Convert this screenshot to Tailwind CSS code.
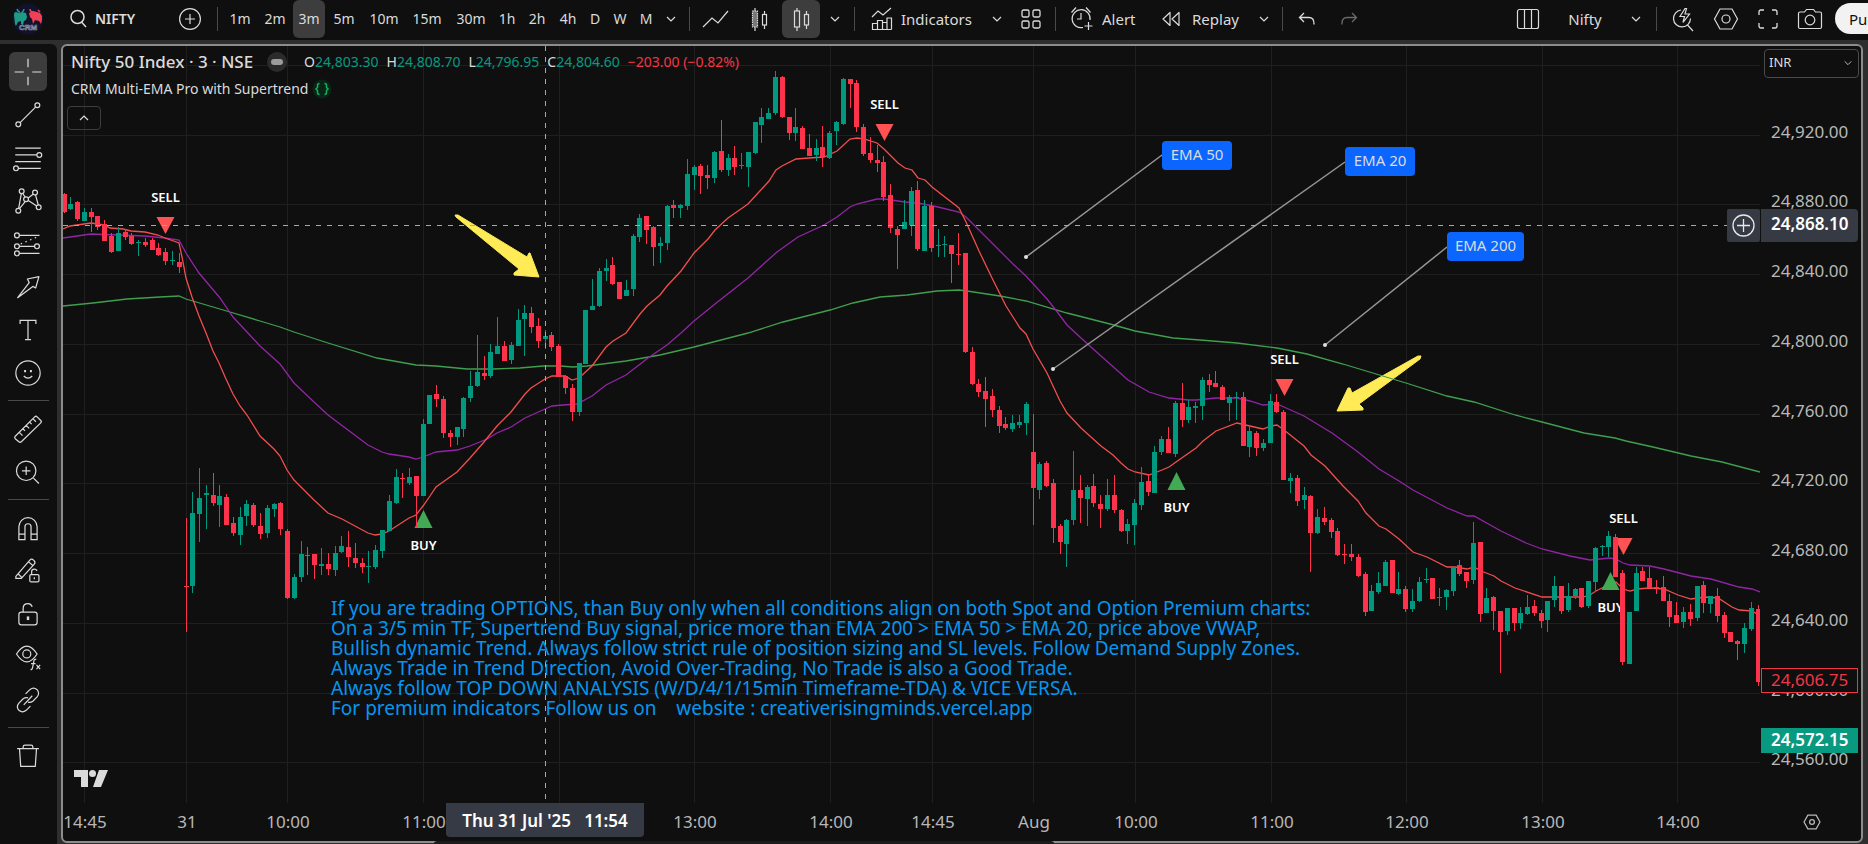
<!DOCTYPE html>
<html lang="en">
<head>
<meta charset="utf-8">
<title>NIFTY chart</title>
<script src="https://cdn.jsdelivr.net/npm/@tailwindcss/browser@4"></script>
</head>
<body class="h-screen flex flex-col overflow-hidden bg-[#2e2e2e] font-['Noto_Sans',sans-serif] text-[#dbdbdb]">

<svg class="hidden">
  <symbol id="chev" viewBox="0 0 12 12"><path d="M2 4l4 4 4-4" fill="none" stroke="currentColor" stroke-width="1.2"/></symbol>
</svg>

<header class="h-10 shrink-0 bg-[#0f0f0f] flex items-center pb-0.5 text-sm leading-5 whitespace-nowrap overflow-hidden">
  <a href="#" aria-label="Home" class="w-14 flex justify-center shrink-0">
    <svg width="32" height="32" viewBox="0 0 32 32"><circle cx="16" cy="16" r="15.500" fill="#12122b"/><path d="M2 12q0-3 2-3l3 1 3-1 4 1 1 4-1 3-2 1-1 4-2-1v-3l-3 1-2 4-1-2z" fill="#1f9a86"/><path d="M5 6q1 3 3 3M12 6q0 2-2 3" stroke="#1f9a86" stroke-width="1.500" fill="none"/><path d="M17 10l4-2 4 1 3 1 2 3v4l-1 4-2-3-4-1-2 4-1-5-2-2z" fill="#ef4056"/><path d="M18 6q0 3 3 3M26 7l2 2" stroke="#ef4056" stroke-width="1.500" fill="none"/><text x="16" y="27" text-anchor="middle" font-size="8" font-weight="bold" fill="#14142a" stroke="#9aa0b5" stroke-width="0.600" font-family="Liberation Sans">CRM</text></svg>
  </a>
  <button class="w-28 h-full pl-3.5 flex items-center gap-2 shrink-0 font-semibold">
    <svg width="17" height="20" viewBox="0 0 17 20" fill="none" stroke="currentColor" stroke-width="1.500"><circle cx="7.500" cy="8" r="6.500"/><path d="M11.500 13l4.500 5"/></svg>NIFTY
  </button>
  <button aria-label="Compare symbol" class="w-11 flex justify-center shrink-0"><svg width="24" height="24" viewBox="0 0 24 24" fill="none" stroke="currentColor" stroke-width="1.200"><circle cx="12" cy="12" r="10.400"/><path d="M12 7v10M7 12h10"/></svg></button>
  <span class="w-px h-6 bg-[#4a4a4a] mx-[5px] shrink-0"></span>
  <button class="w-[34px] shrink-0">1m</button>
  <button class="w-9 shrink-0">2m</button>
  <button class="w-8 h-[38px] self-start shrink-0 rounded-md bg-[#3d3d3d]">3m</button>
  <button class="w-[38px] shrink-0">5m</button>
  <button class="w-[42px] shrink-0">10m</button>
  <button class="w-11 shrink-0">15m</button>
  <button class="w-11 shrink-0">30m</button>
  <button class="w-7 shrink-0">1h</button>
  <button class="w-8 shrink-0">2h</button>
  <button class="w-[30px] shrink-0">4h</button>
  <button class="w-6 shrink-0">D</button>
  <button class="w-[26px] shrink-0">W</button>
  <button class="w-[26px] shrink-0">M</button>
  <button aria-label="More intervals" class="w-6 flex justify-center shrink-0"><svg width="12" height="12"><use href="#chev"/></svg></button>
  <span class="w-px h-6 bg-[#4a4a4a] mx-1.5 shrink-0"></span>
  <button aria-label="Line" class="w-10 flex justify-center shrink-0"><svg width="28" height="24" viewBox="0 0 28 24" fill="none" stroke="currentColor" stroke-width="1.200"><path d="M1 20l9-9 6 5L26 4"/></svg></button>
  <button aria-label="Candles" class="w-[46px] flex justify-center shrink-0"><svg width="22" height="28" viewBox="0 0 22 28" fill="none" stroke="currentColor" stroke-width="1.200"><path d="M7 3v3M7 22v4M16.500 6v3M16.500 20v4"/><rect x="4.500" y="6" width="5" height="16" fill="#777" stroke-dasharray="1.500 0.800"/><rect x="14.500" y="9.500" width="4" height="10.500"/></svg></button>
  <button aria-label="Hollow candles" class="w-[38px] h-[38px] self-start rounded-md bg-[#3d3d3d] flex justify-center items-center shrink-0"><svg width="22" height="28" viewBox="0 0 22 28" fill="none" stroke="currentColor" stroke-width="1.200"><path d="M7 3v3M7 22v4M16.500 6v3M16.500 20v4"/><rect x="4.500" y="6" width="5" height="16"/><rect x="14.500" y="9.500" width="4" height="10.500"/></svg></button>
  <button aria-label="More chart types" class="w-[30px] flex justify-center shrink-0"><svg width="12" height="12"><use href="#chev"/></svg></button>
  <span class="w-px h-6 bg-[#4a4a4a] mx-1 shrink-0"></span>
  <button class="w-[122px] pl-3 flex items-center gap-2 shrink-0 text-[15px]"><svg width="22" height="24" viewBox="0 0 22 24" fill="none" stroke="currentColor" stroke-width="1.200"><path d="M1 10l6-6 5 4 8-7M1.500 22.500v-6h5v6zM6.500 22.500v-9h5v9M11.500 22.500v-7h4.500v7M16 22.500V11h4.500v11.500M1.500 22.500h19"/></svg>Indicators</button>
  <button aria-label="Favourite indicators" class="w-8 flex justify-center shrink-0"><svg width="12" height="12"><use href="#chev"/></svg></button>
  <button aria-label="Layout templates" class="w-9 flex justify-center shrink-0"><svg width="20" height="20" viewBox="0 0 20 20" fill="none" stroke="currentColor" stroke-width="1.300"><rect x="1" y="1" width="7" height="7" rx="1.500"/><rect x="12" y="1" width="7" height="7" rx="1.500"/><rect x="1" y="12" width="7" height="7" rx="1.500"/><rect x="12" y="12" width="7" height="7" rx="1.500"/></svg></button>
  <span class="w-px h-6 bg-[#4a4a4a] mx-1.5 shrink-0"></span>
  <button class="w-[92px] pl-2 flex items-center gap-2 shrink-0 text-[15px]"><svg width="24" height="26" viewBox="0 0 24 26" fill="none" stroke="currentColor" stroke-width="1.200"><path d="M13 21.500A9 9 0 1 1 20 14M11 7v6H7M1.500 6.500l4.500-5M16 1.500l4.500 5M18.500 16v8M14.500 20h8"/></svg>Alert</button>
  <button class="w-[92px] pl-2 flex items-center gap-3 shrink-0 text-[15px]"><svg width="18" height="16" viewBox="0 0 18 16" fill="none" stroke="currentColor" stroke-width="1.200" stroke-linejoin="round"><path d="M8 1.500v13L1 8zM17 1.500v13L10 8z"/></svg>Replay</button>
  <button aria-label="Replay options" class="w-9 flex justify-center shrink-0"><svg width="12" height="12"><use href="#chev"/></svg></button>
  <span class="w-px h-6 bg-[#4a4a4a] mr-1 shrink-0"></span>
  <button aria-label="Undo" class="w-10 flex justify-center shrink-0"><svg width="18" height="14" viewBox="0 0 18 14" fill="none" stroke="currentColor" stroke-width="1.300"><path d="M6 1L1.500 5.500 6 10M2 5.500h9q5 0 5 6v1"/></svg></button>
  <button aria-label="Redo" class="w-11 flex justify-center shrink-0 text-[#6a6a6a]"><svg width="18" height="14" viewBox="0 0 18 14" fill="none" stroke="currentColor" stroke-width="1.300"><path d="M12 1l4.500 4.500L12 10M16 5.500H7q-5 0-5 6v1"/></svg></button>
  <div class="flex-1"></div>
  <button aria-label="Select layout" class="w-11 flex justify-center shrink-0"><svg width="24" height="22" viewBox="0 0 24 22" fill="none" stroke="currentColor" stroke-width="1.200"><rect x="1.500" y="1.500" width="21" height="19" rx="2"/><path d="M8.500 1.500v19M15.500 1.500v19"/></svg></button>
  <button class="w-[70px] shrink-0 text-[15px]">Nifty</button>
  <button aria-label="Manage layouts" class="w-8 flex justify-center shrink-0"><svg width="12" height="12"><use href="#chev"/></svg></button>
  <span class="w-px h-6 bg-[#4a4a4a] mx-1 shrink-0"></span>
  <button aria-label="Quick search" class="w-11 flex justify-center shrink-0"><svg width="26" height="28" viewBox="0 0 26 28" fill="none" stroke="currentColor" stroke-width="1.200"><path d="M11 5a8.500 8.500 0 1 0 9.500 8.500M17.500 20l5.500 6M15 3.500l-5 8h4.500l-1.500 6 6.500-8.500H15l1.500-5.500z"/></svg></button>
  <button aria-label="Settings" class="w-[42px] flex justify-center shrink-0"><svg width="26" height="24" viewBox="0 0 26 24" fill="none" stroke="currentColor" stroke-width="1.200"><path d="M7 2h12l5.500 10L19 22H7L1.500 12z"/><circle cx="13" cy="12" r="4"/></svg></button>
  <button aria-label="Fullscreen" class="w-[42px] flex justify-center shrink-0"><svg width="22" height="22" viewBox="0 0 22 22" fill="none" stroke="currentColor" stroke-width="1.300"><path d="M2 7V4q0-2 2-2h3M15 2h3q2 0 2 2v3M20 15v3q0 2-2 2h-3M7 20H4q-2 0-2-2v-3"/></svg></button>
  <button aria-label="Snapshot" class="w-[42px] flex justify-center shrink-0"><svg width="26" height="22" viewBox="0 0 26 22" fill="none" stroke="currentColor" stroke-width="1.200"><path d="M3 4h4.500l2-2.500h7l2 2.500H23q1.500 0 1.500 1.500V19q0 1.500-1.500 1.500H3Q1.500 20.500 1.500 19V5.500Q1.500 4 3 4z"/><circle cx="13" cy="12" r="4.800"/></svg></button>
  <button class="w-[33px] h-[31px] ml-1 shrink-0 pl-3.5 rounded-l-full bg-[#f2f2f2] text-[#0f0f0f] text-[15px] text-left overflow-hidden self-start mt-[3px] pr-0">Publish</button>
</header>

<div class="flex-1 min-h-0 flex pt-1">
  <nav class="w-[57px] shrink-0 bg-[#0f0f0f] rounded-tr-md pt-1.5 flex flex-col items-center [&_svg]:block" id="tools"></nav>

  <main class="relative flex-1 min-w-0 ml-1 mr-[5px] mb-px border-2 border-[#8c8c8c] rounded-md bg-[#0f0f0f] flex flex-col overflow-hidden">
    <div class="flex-1 min-h-0 flex">
      <section class="relative flex-1 min-w-0">
        <svg id="plot" class="block w-full h-full" viewBox="63 46 1697 757" preserveAspectRatio="xMinYMin meet" font-family="Noto Sans"></svg>
        <div class="absolute left-2 top-1 flex flex-col items-start">
          <div class="flex items-center h-6 whitespace-nowrap">
            <h1 class="text-[17px] w-[192px] font-medium">Nifty 50 Index · 3 · NSE</h1>
            <span class="w-5 h-5 rounded-full bg-[#2b2b2b] flex items-center justify-center mr-[17px] ml-1"><span class="w-3 h-1.5 rounded-full bg-[#9c9c9c]"></span></span>
            <div class="flex gap-2 text-sm text-[#dbdbdb] [&_b]:font-normal [&_b]:text-[#089981]">
              <span>O<b>24,803.30</b></span><span>H<b>24,808.70</b></span><span>L<b>24,796.95</b></span><span>C<b>24,804.60</b></span><span class="text-[#f23645]">−203.00 (−0.82%)</span>
            </div>
          </div>
          <div class="flex items-center h-[30px] text-sm gap-1 whitespace-nowrap">CRM Multi-EMA Pro with Supertrend
            <svg width="20" height="20" viewBox="0 0 20 20"><circle cx="10" cy="10" r="9.500" fill="#0b2418"/><path d="M7.500 4.500Q5.500 4.500 5.500 6.500v2L4 10l1.500 1.500v2q0 2 2 2M12.500 4.500q2 0 2 2v2L16 10l-1.500 1.500v2q0 2-2 2" fill="none" stroke="#10b35c" stroke-width="1.500"/></svg>
          </div>
          <button aria-label="Collapse legend" class="-ml-1 mt-0.5 w-[34px] h-6 border border-[#3d3d3d] rounded flex items-center justify-center"><svg width="12" height="12" class="rotate-180"><use href="#chev"/></svg></button>
        </div>
      </section>
      <aside id="prices" class="relative w-[101px] shrink-0 text-[17px] leading-6 text-[#b8b8b8]">
        <select aria-label="Currency" class="appearance-none absolute left-1 top-[3px] w-[95px] h-[29px] pb-1 pl-1 bg-[#0f0f0f] border border-[#4a4a4a] rounded text-[13px] text-[#dbdbdb]"><option>INR</option></select>
        <svg width="10" height="10" class="absolute right-2 top-3"><use href="#chev"/></svg>
      </aside>
    </div>
    <div id="times" class="relative h-[38px] shrink-0 text-[17px] leading-6 text-[#b8b8b8]">
      <button aria-label="Axis settings" class="absolute right-10 top-2.5"><svg width="18" height="18" viewBox="0 0 26 24" fill="none" stroke="currentColor" stroke-width="1.800"><path d="M7 2h12l5.500 10L19 22H7L1.500 12z"/><circle cx="13" cy="12" r="3.500"/></svg></button>
    </div>
  </main>
</div>
<div class="absolute bottom-0 left-[434px] right-[814px] h-[3px] bg-[#1c1c1c] rounded-t"></div>

<script>
// Drawing tools; null is a divider
const tools = [
 ['Cross','<path d="M14 3v7M14 18v7M3 14h7.500M17.500 14H25"/>'],
 ['Trend line','<circle cx="21.700" cy="6" r="2"/><circle cx="6" cy="21.700" r="2"/><path d="M7.500 20.300L20.200 7.500"/>'],
 ['Fib retracement','<path d="M3.500 5.800h21M3.500 11.500h17.700M3.500 17h21M6.200 22.500h18.300"/><circle cx="23.300" cy="11.500" r="2"/><circle cx="4.100" cy="22.500" r="2"/>'],
 ['Patterns','<circle cx="8.800" cy="6" r="2"/><circle cx="19.800" cy="7.100" r="2"/><circle cx="6" cy="22" r="2"/><circle cx="22.800" cy="19.200" r="2"/><circle cx="12.400" cy="12.600" r="2"/><path d="M8.500 8L6.300 20M9.700 7.800l1.900 3M11.700 14.500L7 20.200M14.200 11.500l4-3M14.200 13.600l7 4.500M20.200 9l2.200 8.200"/>'],
 ['Forecasting','<circle cx="4.900" cy="6.900" r="2"/><circle cx="4.900" cy="15.900" r="2"/><circle cx="21.400" cy="15.900" r="2"/><circle cx="4.900" cy="21.700" r="2"/><path d="M7 6.900h16.500M7 15.900h12.300M7 21.700h16.500"/><path d="M8 14L22 8" stroke-dasharray="1.200 3"/>'],
 ['Arrow','<path d="M5.500 22.800L15 10.400 13.500 7.400 23 5.500 20.300 14.800 18 13.500z" stroke-linejoin="round"/>'],
 ['Text','<path d="M7.500 9V6h13v3M14 6v16M11.500 22h5"/>'],
 ['Icons','<circle cx="14" cy="14" r="10"/><path d="M10.500 16.500q3.500 3.500 7 0"/><path d="M10.800 12.500h1.600M15.600 12.500h1.600" stroke-width="1.800"/>'],
 null,
 ['Measure','<path d="M3.500 20L19.500 4q1-1 2 0l3 3q1 1 0 2L8.500 24.500q-1 1-2 0l-3-2.500q-1-1 0-2zM7 17l2.500 2.500M10 14l1.500 1.500M12.500 11l2.500 2.500M15.500 8.500L17 10M18 5.500l2.500 2.500"/>'],
 ['Zoom in','<circle cx="12.500" cy="13" r="8"/><path d="M18.500 19l4.500 4.500M12.500 9.500v7M9 13h7"/>'],
 null,
 ['Magnet','<path d="M6.500 23.500V13a7.500 7.500 0 0 1 15 0v10.500h-5V13a2.500 2.500 0 0 0-5 0v10.500zM6.500 19h5M16.500 19h5"/>'],
 ['Keep drawing','<path d="M4 18.500L15.500 5q1.500-1.500 3 0l.500.500q1.500 1.500 0 3L8.500 20H4zM6 16.500l3 3M14.500 6.500l3.500 3"/><rect x="15.500" y="17" width="7.500" height="6" rx="1"/><path d="M17 17v-2.500q0-2 2.200-2 1.600 0 2.200 1.500M19.200 19.200v1.500"/>'],
 ['Lock drawings','<rect x="6.500" y="12.500" width="15" height="10.500" rx="2"/><path d="M10 12.500V9.500q0-4 4-4 2.500 0 3.500 2.500"/><path d="M14 16v3" stroke-width="2"/>'],
 ['Hide','<path d="M4.500 11.500q8.500-13 17 0q-8.500 13-17 0z"/><circle cx="13" cy="11.500" r="3.300"/><path d="M16 24.500q1.500 0 1.800-2l1-5q.3-2 2-1.500M16.500 19.500h3.700M21 20.500l3 3.500M24 20.500l-3 3.500"/>'],
 ['Sync','<path d="M12 9l3.500-3.500q3-2.500 6 0 2.500 3 0 6L18 15q-2 1.500-4 .8M16 19l-3.500 3.500q-3 2.500-6 0-2.500-3 0-6L10 13q2-1.500 4-.8M10.500 18l7-7.500"/>'],
 null,
 ['Remove','<path d="M5 8h18M10 8V6.500Q10 5 11.500 5h5Q18 5 18 6.500V8M7 8l1 14.500h12L21 8"/>'],
];
document.getElementById('tools').innerHTML = tools.map((t, i) => t
  ? `<button aria-label="${t[0]}" class="h-[43px] w-full pr-0.5 flex items-center justify-center shrink-0"><span class="${i ? '' : 'bg-[#3d3d3d] '}w-[38px] h-[39px] rounded-md flex items-center justify-center"><svg width="34" height="34" viewBox="0 0 28 28" fill="none" stroke="currentColor" stroke-width="1">${t[1]}</svg></span></button>`
  : '<span class="w-[41px] h-px my-1.5 shrink-0 bg-[#4a4a4a]"></span>').join('');

// One entry per 3-minute bar: direction, high, low, body top, body bottom
const bars = `r193 213 194 212,g197 210 204 209,r201 221 202 219,g208 221 212 221,r208 232 212 217,r216 230 216 227,r220 241 224 241,r233 253 236 252,g227 251 233 251,r229 240 232 237,r233 245 236 244,g240 256 242 243,r238 247 242 245,r238 250 240 250,r243 256 248 255,r248 265 252 261,g251 265 260 261,r253 273 262 267,
r518 632 586 587,g492 593 513 586,g468 542 498 514,g485 529 493 495,r473 506 495 503,g485 527 496 505,r494 525 497 525,r517 536 523 533,g507 545 517 535,g500 526 504 516,r503 527 505 525,r513 539 526 534,g505 538 508 533,g503 517 504 509,r502 535 503 529,r529 599 531 598,g574 599 577 598,g541 582 554 577,r547 575 555 556,r554 579 554 565,g548 575 564 566,r553 575 564 569,g546 576 553 570,g536 553 546 552,r531 567 547 557,r543 568 558 563,r558 573 563 567,g551 583 566 567,g545 569 550 567,g530 558 530 551,g495 531 501 531,g469 504 477 503,r473 498 478 479,g468 485 477 483,r476 527 476 496,g419 496 424 496,g395 424 395 424,r385 407 394 399,r396 438 399 433,r430 447 433 437,
g427 445 427 437,g397 437 398 429,g371 402 386 398,g335 387 372 386,r356 380 373 376,g344 378 352 376,g317 354 346 354,r341 361 346 361,g342 364 345 360,g309 346 320 346,g305 356 313 319,r307 333 313 327,r318 348 326 341,g330 349 336 339,r332 351 335 347,r344 377 346 377,r375 394 376 388,r384 421 388 412,g363 416 363 412,g310 364 310 364,g279 310 306 310,g268 307 271 306,g259 281 268 271,r257 285 265 284,r282 299 282 299,g280 296 290 296,g234 296 236 289,g214 242 218 237,r216 244 216 230,r226 266 227 247,g237 263 243 246,g205 250 206 243,r200 218 205 208,g204 218 205 208,g159 210 174 206,
g165 190 167 175,r164 194 166 176,r165 189 175 178,g151 183 152 178,r120 172 151 170,g154 176 158 170,r146 175 158 167,g153 169 165 166,g152 187 152 167,g122 154 122 153,g108 143 117 125,g108 119 113 119,g71 115 77 113,r76 118 77 117,r117 140 117 133,g108 141 127 133,r126 149 128 149,r134 156 148 156,g139 161 148 155,r126 167 147 157,g131 159 133 158,g121 145 122 131,g78 125 79 124,r79 108 79 84,r80 132 83 127,r124 156 127 154,r137 163 153 160,r145 172 160 163,r156 201 162 197,r184 233 195 228,r226 269 229 235,g200 229 222 229,g187 236 191 225,r181 251 190 249,g200 251 206 251,r202 252 206 248,g229 257 245 246,g236 257 244 245,r245 283 245 254,r233 265 254 255,r253 353 253 352,
r347 385 352 384,r379 397 384 392,r377 427 391 399,r389 417 396 410,r406 433 410 426,r417 430 424 428,g415 432 423 429,g415 428 422 425,g402 435 404 423,r414 525 452 488,g462 499 464 490,r461 487 463 486,r479 543 483 528,r524 554 526 542,g519 567 520 544,g451 525 490 520,r475 523 490 498,g485 526 487 499,r474 507 486 503,r495 528 504 509,g479 511 495 509,r475 513 495 510,r509 532 510 531,g519 544 524 531,g499 545 503 525,g467 510 482 505,r474 496 481 492,g446 493 452 493,g436 455 439 452,r427 453 439 453,g401 457 403 454,r383 427 403 420,g400 423 407 420,g402 423 406 408,g377 420 380 406,r374 392 380 385,r371 387 383 387,r385 400 387 400,g395 421 397 403,g392 420 397 398,r392 446 397 446,g425 457 431 447,r431 456 433 448,g439 451 443 448,g394 443 401 443,r394 413 402 412,r410 480 412 480,g473 493 478 481,r475 506 478 501,g487 509 495 500,r495 572 496 533,g509 534 517 533,r507 525 518 522,r518 538 520 532,r528 556 531 555,
r544 564 554 555,r544 561 554 557,r554 577 557 576,r572 616 574 612,g585 611 591 611,g572 594 583 592,g560 586 562 586,r560 593 560 593,g572 595 589 594,r586 612 589 609,g589 612 601 609,g577 602 582 601,g568 583 579 580,r578 599 578 599,g588 606 597 598,g589 610 590 597,g567 596 567 591,r560 576 565 574,r572 588 572 581,g522 584 543 580,r542 622 542 614,g588 613 598 613,r596 630 597 611,r611 673 611 632,g608 635 608 631,r608 631 608 623,g607 629 613 623,g595 615 607 614,r600 616 606 613,r610 628 613 621,g601 632 601 620,g576 607 586 600,r586 614 586 611,g583 612 596 610,g588 599 589 596,r588 608 588 607,g581 608 581 606,g547 592 548 582,g545 556 546 547,g531 557 536 547,r534 577 537 577,r570 665 573 662,g612 664 612 664,g567 611 573 611,r567 581 571 581,r567 588 578 588,r580 594 587 588,r576 601 587 601,r594 627 601 617,r602 623 615 623,g607 628 612 622,r604 626 612 619,g586 621 586 618,r581 613 585 603,g596 613 596 604,r588 622 596 616,r612 638 615 633,r632 642 632 642,r640 660 641 644,g623 653 628 644,g602 631 608 629,r605 686 609 682`.split(',').map(s => s.trim());

const ema20 = '63,229 70,226 91,223 104,225 110,228 123,229 131,231 145,232 158,235 165,238 179,243 182,257 186,278 192,297 199,316 206,333 213,351 219,363 226,379 233,394 240,406 247,415 260,436 274,449 280,456 287,470 294,480 314,500 328,513 342,519 368,533 375,535 382,534 389,531 409,518 416,515 423,506 430,496 436,487 450,477 457,472 470,458 484,442 497,426 504,419 511,412 525,394 531,388 545,379 552,376 565,376 572,380 579,378 592,366 606,347 613,341 626,333 640,314 647,306 660,295 667,286 681,271 694,253 708,239 715,230 728,218 748,204 769,181 776,170 782,166 796,159 809,158 824,157 837,151 850,139 857,138 864,139 877,143 884,149 898,163 905,168 912,170 918,178 925,180 932,187 959,208 966,222 979,251 993,280 1006,306 1013,317 1020,328 1026,334 1033,349 1040,361 1047,373 1060,401 1067,413 1081,428 1101,446 1113,455 1121,463 1128,469 1135,472 1149,475 1162,470 1169,467 1176,462 1196,448 1203,441 1216,431 1237,423 1250,426 1263,429 1271,426 1277,425 1284,430 1304,446 1311,455 1325,466 1343,486 1358,501 1366,513 1379,526 1386,529 1399,539 1413,552 1427,557 1447,567 1455,567 1467,569 1474,567 1481,571 1494,576 1501,581 1515,588 1542,597 1560,597 1583,597 1590,595 1596,591 1610,584 1616,582 1623,589 1630,591 1637,589 1650,588 1664,589 1678,595 1691,599 1705,597 1718,598 1732,607 1739,610 1752,611 1760,616';
const ema50 = '63,238 91,234 120,235 145,236 165,238 179,240 186,253 199,273 220,298 233,317 247,332 260,346 280,364 294,383 314,402 328,415 348,430 368,445 382,452 389,454 409,457 416,459 423,457 436,452 457,450 470,446 487,439 497,433 511,427 525,418 545,409 552,406 563,405 577,404 592,396 606,385 626,375 648,358 667,345 681,333 694,321 715,304 748,278 777,252 798,237 824,225 837,217 850,207 857,204 877,199 884,199 905,202 918,203 938,207 959,212 966,217 993,244 1013,264 1026,276 1047,299 1055,309 1067,325 1081,338 1101,356 1128,380 1135,384 1149,392 1169,398 1189,400 1196,400 1216,398 1237,398 1250,401 1263,405 1277,404 1284,407 1304,416 1332,433 1358,452 1379,469 1399,481 1413,490 1447,508 1467,516 1474,516 1501,531 1526,543 1542,549 1570,556 1590,560 1610,558 1616,559 1623,563 1630,565 1650,566 1664,569 1691,576 1711,579 1739,587 1752,589 1760,592';
const ema200 = '63,306 93,303 127,299 160,297 179,296 186,299 230,312 260,321 280,327 294,332 328,343 377,358 416,365 436,366 467,369 493,369 520,368 543,366 560,366 573,367 587,366 626,361 660,355 694,347 748,333 783,322 830,310 853,303 880,297 907,295 937,291 959,290 967,291 1000,296 1026,301 1067,313 1110,324 1135,331 1173,338 1200,340 1237,343 1277,348 1307,354 1343,364 1386,377 1406,383 1447,396 1474,402 1515,415 1542,422 1584,433 1615,438 1626,441 1653,447 1691,456 1722,462 1760,472';

const ticks = [[84,'14:45'],[186,'31'],[287,'10:00'],[423,'11:00'],[559,''],[694,'13:00'],[830,'14:00'],[932,'14:45'],[1033,'Aug'],[1135,'10:00'],[1271,'11:00'],[1406,'12:00'],[1542,'13:00'],[1677,'14:00']];
const levels = [65,135,204,274,344,414,483,553,623,693,762];

let s = '<path stroke="#1f1f1f" d="' + ticks.map(t => `M${t[0]}.5 46V803`).join('') + levels.map(y => `M63 ${y}.5H1760`).join('') + '"/>';
s += '<g fill="#ffeb55" stroke="#ffeb55" stroke-linejoin="round"><path d="M455 215l3 0L527 257l2-4 1 0 9 24-25-2 0-2 5-4-63-52z"/><path d="M1421 356l-1 3-61 45 4 4 0 2-26 1 11-23 2 0 2 5 66-37z"/></g>';
s += `<g fill="none" stroke-width="1.300"><polyline points="${ema200}" stroke="#3f9f4f"/><polyline points="${ema50}" stroke="#9225a6"/><polyline points="${ema20}" stroke="#f24e4e"/></g>`;
s += '<g font-size="13" font-weight="600" fill="#fff" text-anchor="middle">';
[[165.5,217,198],[884.5,124,105],[1284.5,379,360],[1623.5,538,519]].forEach(([x,y,t]) => s += `<path d="M${x-9} ${y}h18l-9 17z" fill="#ff5252"/><text x="${x}" y="${t+4}">SELL</text>`);
[[423.5,510,546],[1176.5,472,508],[1610.5,572,608]].forEach(([x,y,t]) => s += `<path d="M${x-9} ${y+18}h18l-9 -18z" fill="#42aa55"/><text x="${x}" y="${t+4}">BUY</text>`);
s += '</g><g shape-rendering="crispEdges">';
bars.forEach((b, n) => {
  const x = Math.floor(186 + 6.776 * (n - 18)), [h, l, t, m] = b.slice(1).split(' ').map(Number);
  s += `<path fill="${b[0] === 'g' ? '#009980' : '#ff324c'}" d="M${x} ${h}h1V${l}h-1zM${x-2} ${t}h5V${m}h-5z"/>`;
});
s += '</g>';
[['EMA 50',1162,141,70,1026,257,1162,155],['EMA 20',1345,147,70,1053,369,1345,162],['EMA 200',1447,232,77,1325,345,1447,247]].forEach(([t,x,y,w,a,b,c,d]) =>
  s += `<path d="M${a} ${b}L${c} ${d}" stroke="#969696" stroke-width="1.500"/><circle cx="${a}" cy="${b}" r="2" fill="#e0e0e0"/><rect x="${x}" y="${y}" width="${w}" height="29" rx="4" fill="#0a66ff"/><text x="${x+w/2}" y="${y+19}" font-size="15" text-anchor="middle" fill="#dbdbdb">${t}</text>`);
s += '<g font-size="19" fill="#0496f0">' + ['If you are trading OPTIONS, than Buy only when all conditions align on both Spot and Option Premium charts:','On a 3/5 min TF, Supertrend Buy signal, price more than EMA 200 &gt; EMA 50 &gt; EMA 20, price above VWAP,','Bullish dynamic Trend. Always follow strict rule of position sizing and SL levels. Follow Demand Supply Zones.','Always Trade in Trend Direction, Avoid Over-Trading, No Trade is also a Good Trade.','Always follow TOP DOWN ANALYSIS (W/D/4/1/15min Timeframe-TDA) &amp; VICE VERSA.','For premium indicators Follow us on    website : creativerisingminds.vercel.app'].map((t, i) => `<text x="331" y="${615 + 20 * i}" class="whitespace-pre">${t}</text>`).join('') + '</g>';
s += '<path d="M63 225.500H1727M545.500 46V803" stroke="#a8a8a8" stroke-dasharray="5 6"/>';
s += '<rect x="1727" y="209" width="33" height="33" rx="2" fill="#363a45"/><g fill="none" stroke="#e8e8e8" stroke-width="1.300"><circle cx="1743.500" cy="225.500" r="10.500"/><path d="M1743.500 219v13M1737 225.500h13"/></g>';
s += '<g fill="#dbdbdb"><path d="M74 770h14v17h-7v-10h-7zM99 770h9l-7 17h-8z"/><circle cx="92.500" cy="773.500" r="3.500"/></g>';
document.getElementById('plot').innerHTML = s;

document.getElementById('times').insertAdjacentHTML('afterbegin', ticks.map(([x, t]) =>
  `<span class="absolute top-[7px] -translate-x-1/2" style="left:${x - 62}px">${t}</span>`).join('') +
  '<span class="absolute left-[383px] top-0 w-[198px] h-[34px] bg-[#363a45] text-white font-semibold leading-9 text-center whitespace-pre rounded-b-sm">Thu 31 Jul \'25   11:54</span>');
document.getElementById('prices').insertAdjacentHTML('beforeend', levels.slice(1).map((y, i) =>
  `<span class="absolute left-[11px]" style="top:${y - 61}px">${(24920 - 40 * i).toLocaleString('en-US')}.00</span>`).join('') +
  `<span class="absolute left-px top-[163px] w-[97px] h-[33px] pl-2.5 leading-[30px] bg-[#363a45] text-white font-semibold rounded-r-sm">24,868.10</span>
   <span class="absolute left-px top-[622px] w-[97px] h-[25px] pl-[9px] leading-[22px] bg-[#0f0f0f] border border-[#f23645] text-[#f23645]">24,606.75</span>
   <span class="absolute left-px top-[682px] w-[97px] h-[25px] pl-2.5 leading-6 bg-[#089981] text-white font-semibold">24,572.15</span>`);
</script>
</body>
</html>
